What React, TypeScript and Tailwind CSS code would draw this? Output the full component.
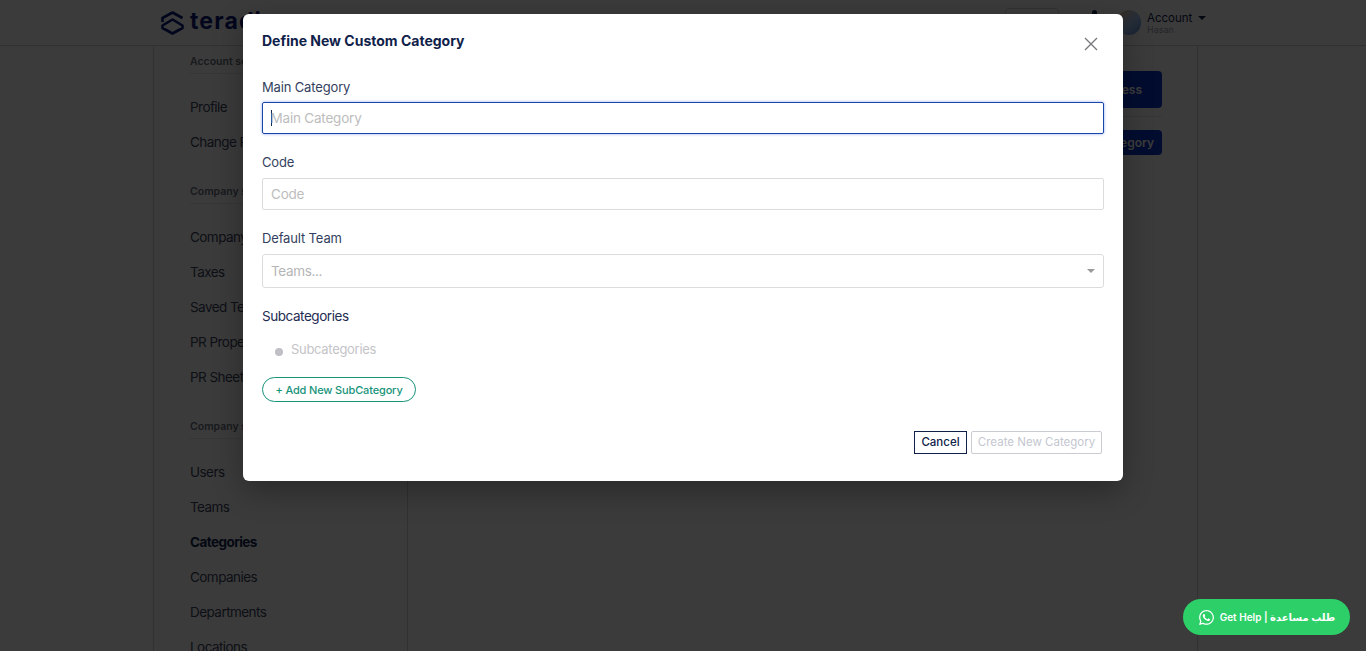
import { FaWhatsapp } from "react-icons/fa";

const font = { fontFamily: "Inter, 'DejaVu Sans', sans-serif" };

const sideGroups = [
  { title: "Account settings", items: ["Profile", "Change Password"] },
  { title: "Company settings", items: ["Company Profile", "Taxes", "Saved Terms", "PR Properties", "PR Sheet"] },
  { title: "Company structure", items: ["Users", "Teams", "Categories", "Companies", "Departments", "Locations"] },
];

function Logo() {
  return (
    <svg width="23" height="24" viewBox="0 0 23 24" fill="none" stroke="#0b1a7a" strokeWidth="2.6" strokeLinejoin="round">
      <path d="M1.5 11 V7 L11.5 1.5 L21.5 7" />
      <path d="M11.5 8.5 L21.5 14.5 V17 L11.5 22.5 L1.5 17 V14.5 Z" />
    </svg>
  );
}

function Header() {
  return (
    <header className="flex h-[46px] items-center border-b border-gray-300 bg-white pl-[161px] pr-[161px]">
      <Logo />
      <span className="ml-[6px] mt-[-2px] text-[23px] font-bold leading-none tracking-[0.05em] text-[#0b1a7a]">teradix</span>
      <div className="ml-auto mt-[-15px] h-[15px] w-[54px] rounded border border-gray-300" />
      <div className="ml-[33px] mt-[-22px] h-[4px] w-[5px] rounded-t-full bg-[#14264f]" />
      <div className="ml-[20px] h-[25px] w-[24px] rounded-full bg-[linear-gradient(135deg,#f5c89a,#a5c8f5_55%,#5a8fd8)]" />
      <div className="ml-[6px] mt-[1px] w-[58px]">
        <div className="flex items-center text-[11.5px] leading-[13px] text-[#14264f]">
          Account
          <span className="ml-[6px] h-0 w-0 border-x-[4px] border-t-[4px] border-x-transparent border-t-[#14264f]" />
        </div>
        <div className="text-[9px] leading-[10px] text-gray-400">Hasan</div>
      </div>
    </header>
  );
}

function Sidebar() {
  return (
    <aside className="w-[255px] shrink-0 border-x border-gray-300 pl-[36px] pr-[10px] pt-[10px]">
      {sideGroups.map((group) => (
        <div key={group.title} className="mb-[26px]">
          <div className="h-[18px] border-b border-gray-200 text-[10.5px] font-semibold leading-[12px] text-gray-500">
            {group.title}
          </div>
          <ul className="mt-[16px]">
            {group.items.map((item) => (
              <li
                key={item}
                className={`h-[35px] text-[13.5px] leading-[35px] tracking-[-0.55px] ${
                  item === "Categories" ? "font-bold text-[#14264f]" : "text-[#3b4660]"
                }`}
              >
                {item}
              </li>
            ))}
          </ul>
        </div>
      ))}
    </aside>
  );
}

function Main() {
  return (
    <main className="w-[790px] shrink-0 border-r border-gray-300 pr-[35px] pt-[25px]">
      <div className="flex flex-col items-end">
        <button className="h-[37px] rounded bg-[#0b34c9] px-[20px] text-[12px] font-semibold text-white">Add New Business</button>
        <div className="mt-[8px] h-px w-full bg-gray-200" />
        <button className="mt-[13px] h-[25px] rounded bg-[#0b34c9] px-[8px] text-[12px] font-semibold text-white">New Category</button>
      </div>
    </main>
  );
}

function Field({ label, placeholder, focused }: { label: string; placeholder: string; focused?: boolean }) {
  return (
    <div className="mb-[20px]">
      <div className={`text-[13px] leading-[16px] tracking-[-0.15px] text-[#333f5e] ${focused ? "mb-[7px]" : "mb-[8px]"}`}>{label}</div>
      <div
        className={`flex h-[32px] items-center rounded-[2px] text-[13.5px] tracking-[-0.2px] text-[#bdbdbd] ${
          focused ? "border-[1.5px] border-[#1746a8] px-[7.5px] shadow-[0_0_3px_rgba(30,80,220,0.5)]" : "border border-[#dcdcdc] px-[8px]"
        }`}
      >
        {focused && <span className="mr-[-1px] h-[16px] w-px bg-[#14264f]" />}
        {placeholder}
      </div>
    </div>
  );
}

function Modal() {
  return (
    <div className="absolute inset-0 flex justify-center bg-black/[0.77] pt-[14px]">
      <div className="h-[467px] w-[880px] rounded-[6px] bg-white px-[19px] pt-[17px] shadow-[0_10px_30px_rgba(0,0,0,0.3)]">
        <div className="mb-[28px] flex h-[20px] items-center justify-between">
          <h2 className="mt-[-2px] text-[14px] font-bold text-[#0f2149]">Define New Custom Category</h2>
          <svg className="mr-[6px] mt-[6px]" width="14" height="14" viewBox="0 0 14 14" stroke="#77797d" strokeWidth="1.4" fill="none">
            <path d="M1 1 L13 13 M13 1 L1 13" />
          </svg>
        </div>

        <Field label="Main Category" placeholder="Main Category" focused />
        <Field label="Code" placeholder="Code" />

        <div className="mb-[18px]">
          <div className="mb-[8px] text-[13px] leading-[16px] tracking-[-0.15px] text-[#333f5e]">Default Team</div>
          <div className="flex h-[34px] items-center justify-between rounded-[3px] border border-[#dcdcdc] px-[8px] text-[13.5px] tracking-[-0.35px] text-[#b5b5b5]">
            Teams...
            <span className="h-0 w-0 border-x-[4px] border-t-[4px] border-x-transparent border-t-[#999]" />
          </div>
        </div>

        <div className="text-[13.5px] leading-[20px] tracking-[-0.45px] text-[#1f2c52]">Subcategories</div>
        <div className="ml-[13px] mt-[15px] flex items-center text-[13px] leading-[16px] tracking-[-0.3px] text-[#c4c4c8]">
          <span className="mr-[8px] mt-[6px] h-[8px] w-[8px] rounded-full bg-[#bfc0c6]" />
          Subcategories
        </div>

        <button className="mt-[20px] block h-[25px] w-[154px] rounded-full border border-[#17937a] pt-px text-[11px] font-medium tracking-[-0.15px] text-[#17937a]">
          + Add New SubCategory
        </button>

        <div className="mr-[2px] mt-[29px] flex justify-end gap-[4px]">
          <button className="h-[23px] w-[53px] border border-[#0f2149] text-[11.5px] font-medium text-[#0f2149]">Cancel</button>
          <button className="h-[23px] w-[131px] rounded-[2px] border border-[#c9ccd3] text-[11.5px] text-[#c4c7d0]">Create New Category</button>
        </div>
      </div>
    </div>
  );
}

function HelpButton() {
  return (
    <div className="absolute left-[1183px] top-[599px] flex h-[36px] w-[167px] items-center justify-center gap-[5px] rounded-full bg-[#2dd068] text-[10px] font-semibold text-white">
      <FaWhatsapp className="text-[17px]" />
      <span>Get Help | طلب مساعدة</span>
    </div>
  );
}

export default function App() {
  return (
    <div className="relative h-[651px] w-[1366px] overflow-hidden bg-white" style={font}>
      <Header />
      <div className="flex pl-[153px]">
        <Sidebar />
        <Main />
      </div>
      <Modal />
      <HelpButton />
    </div>
  );
}
